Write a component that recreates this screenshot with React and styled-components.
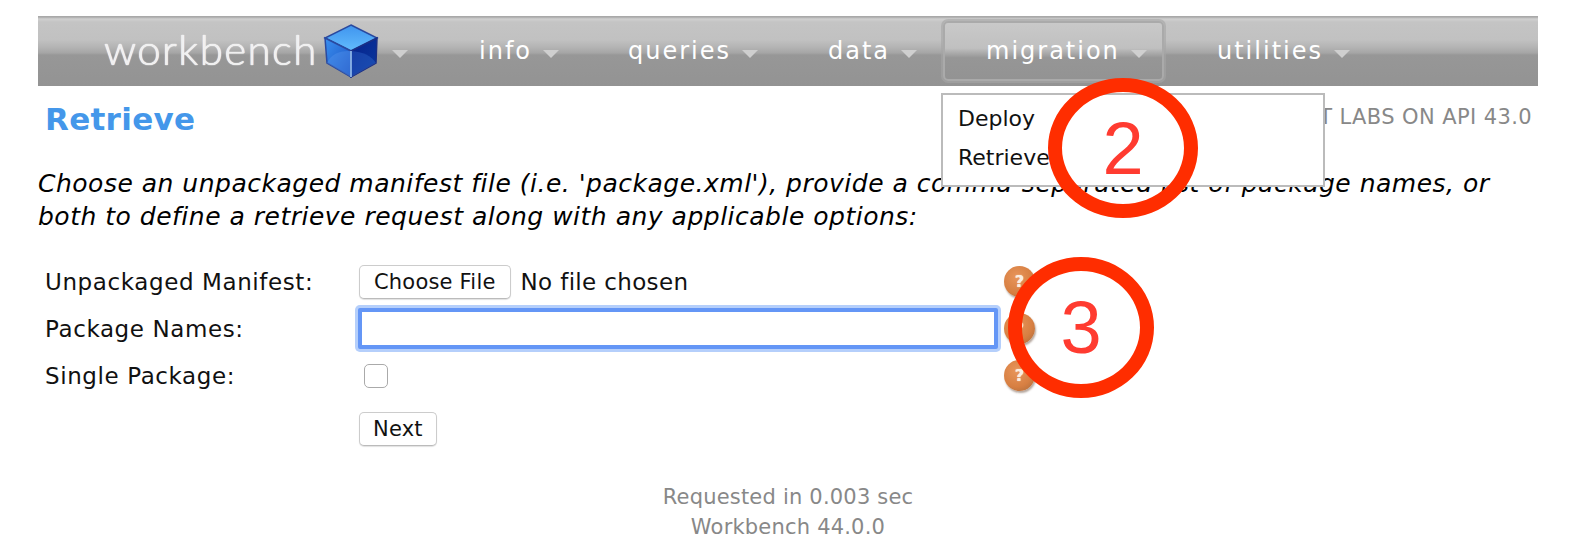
import React from "react";
import styled, { createGlobalStyle } from "styled-components";

const GlobalStyle = createGlobalStyle`
  html, body {
    margin: 0;
    padding: 0;
    background: #fff;
  }
  body {
    font-family: "DejaVu Sans", Verdana, sans-serif;
    color: #000;
  }
`;

const Page = styled.div`
  position: relative;
  width: 1576px;
  height: 556px;
  overflow: hidden;
  padding: 16px 38px 0 38px;
  box-sizing: border-box;
`;

const NavBar = styled.nav`
  position: relative;
  display: flex;
  align-items: center;
  height: 70px;
  background: linear-gradient(
    180deg,
    #a9a9a9 0,
    #a9a9a9 1px,
    #d0d0d0 3px,
    #c4c4c4 6px,
    #c1c1c1 24px,
    #b4b4b4 31px,
    #a5a5a5 37px,
    #979797 39px,
    #939393 70px
  );
`;

const Logo = styled.div`
  display: flex;
  align-items: center;
  width: 380px;
  padding-left: 66px;
  box-sizing: border-box;
`;

const LogoText = styled.span`
  font-family: Lato, "Open Sans", sans-serif;
  font-weight: 300;
  font-size: 42px;
  letter-spacing: 1.4px;
  color: #f0f0f0;
  text-shadow: 0 0 1px #fff, 0 0 1px #fff;
  margin-top: -5px;
`;

const Caret = styled.span`
  display: inline-block;
  width: 0;
  height: 0;
  margin-left: ${(p) => p.$gap || 11}px;
  margin-top: 6px;
  border-left: 8px solid transparent;
  border-right: 8px solid transparent;
  border-top: 8px solid #cfcfcf;
`;

const NavItem = styled.div`
  position: relative;
  display: flex;
  align-items: center;
  height: 60px;
  width: ${(p) => p.$width}px;
  padding-left: ${(p) => p.$pad}px;
  box-sizing: border-box;
  font-size: 24px;
  letter-spacing: 2px;
  color: #fff;
  ${(p) =>
    p.$active &&
    `
    border: 2px solid #aaa;
    border-radius: 5px;
    box-shadow: 0 0 0 2px rgba(165, 165, 165, 0.6);
    background: linear-gradient(180deg, #c9c9c9 0, #c0c0c0 45%, #969696 62%, #939393 100%);
  `}
`;

const Dropdown = styled.div`
  position: absolute;
  left: -4px;
  top: 70px;
  width: 384px;
  height: 94px;
  box-sizing: border-box;
  padding: 8px 15px;
  background: #fff;
  border: 2px solid #bbb;
  z-index: 2;
`;

const DropItem = styled.div`
  height: 39px;
  line-height: 32px;
  font-size: 22px;
  letter-spacing: 0;
  color: #111;
`;

const TitleRow = styled.div`
  display: flex;
  align-items: center;
  justify-content: space-between;
  height: 65px;
  padding: 0 6px 0 7px;
`;

const Title = styled.h1`
  margin: 0;
  font-size: 31px;
  letter-spacing: 0.3px;
  font-weight: 700;
  color: #4497ea;
`;

const Meta = styled.div`
  font-size: 21px;
  letter-spacing: 0.4px;
  color: #888;
  margin-top: -4px;
`;

const Instructions = styled.p`
  margin: 16px 0 0;
  font-size: 25px;
  letter-spacing: 0.5px;
  line-height: 33px;
  font-style: italic;
  color: #000;
  width: 1490px;
`;

const Form = styled.div`
  display: grid;
  grid-template-columns: 313px 652px 40px;
  grid-auto-rows: 47px;
  align-items: center;
  margin: 25px 0 0 7px;
`;

const Label = styled.div`
  font-size: 23px;
  letter-spacing: 0.6px;
  color: #111;
`;

const Field = styled.div`
  display: flex;
  align-items: center;
`;

const PlainButton = styled.button`
  height: 34px;
  padding: 0 ${(p) => p.$pad}px;
  margin-left: 1px;
  background: #fff;
  border: 1px solid #ccc;
  border-bottom-color: #bbb;
  border-radius: 5px;
  box-shadow: 0 1px 1px rgba(0, 0, 0, 0.12);
  font-family: inherit;
  font-size: 21px;
  letter-spacing: 0.2px;
  color: #111;
`;

const FileName = styled.span`
  margin-left: 10px;
  font-size: 23px;
  letter-spacing: 0.35px;
  color: #111;
`;

const TextBox = styled.div`
  width: 632px;
  height: 33px;
  background: #fff;
  border: 4px solid #6496f6;
  box-shadow: 0 0 0 3px #b5cffb;
  border-radius: 2px;
  box-sizing: content-box;
`;

const Check = styled.div`
  width: 22px;
  height: 22px;
  margin-left: 6px;
  border: 1px solid #aaa;
  border-radius: 5px;
  background: #fff;
`;

const Help = styled.div`
  width: 31px;
  height: 31px;
  margin-left: -6px;
  border-radius: 50%;
  display: flex;
  align-items: center;
  justify-content: center;
  background: radial-gradient(circle at 40% 35%, #e8955a 0, #d77f42 58%, #a3683c 100%);
  box-shadow: 1px 2px 2px rgba(90, 60, 40, 0.45);
  color: #fbeee0;
  font-size: 16px;
  font-weight: 700;
  text-shadow: 0 0 1px #fff;
`;

const NextRow = styled.div`
  margin: 13px 0 0 320px;
`;

const Footer = styled.div`
  margin-top: 36px;
  text-align: center;
  font-size: 21px;
  letter-spacing: 0.2px;
  line-height: 30px;
  color: #888;
`;

const Ring = styled.div`
  position: absolute;
  left: ${(p) => p.$x}px;
  top: ${(p) => p.$y}px;
  width: ${(p) => p.$w}px;
  height: ${(p) => p.$h}px;
  box-sizing: border-box;
  border: 14px solid #ff2d00;
  border-radius: 50%;
  display: flex;
  align-items: center;
  justify-content: center;
  font-family: "Liberation Sans", Arial, sans-serif;
  font-size: 74px;
  color: #ff3b30;
  z-index: 3;
`;

function Cube() {
  return (
    <svg width="56" height="54" viewBox="0 0 56 54" style={{ marginLeft: 5 }}>
      <defs>
        <linearGradient id="top" x1="0" y1="0" x2="0" y2="1">
          <stop offset="0" stopColor="#3f94ee" />
          <stop offset="1" stopColor="#62bcfd" />
        </linearGradient>
        <linearGradient id="left" x1="0" y1="0" x2="1" y2="1">
          <stop offset="0" stopColor="#3a90f0" />
          <stop offset="1" stopColor="#1a4fc0" />
        </linearGradient>
        <linearGradient id="right" x1="0" y1="0" x2="1" y2="1">
          <stop offset="0" stopColor="#06208a" />
          <stop offset="1" stopColor="#0a3aa0" />
        </linearGradient>
      </defs>
      <path d="M28 1 L54 14 L28 27 L2 14 Z" fill="url(#top)" stroke="#2a4aa0" strokeWidth="1.5" />
      <path d="M2 14 L28 27 L28 53 L4 39 Z" fill="url(#left)" stroke="#2a4aa0" strokeWidth="1.5" />
      <path d="M54 14 L28 27 L28 53 L53 39 Z" fill="url(#right)" stroke="#1a2f85" strokeWidth="1.5" />
      <path d="M4 39 Q10 26 28 27 L28 53 Z" fill="#5b9cf0" opacity="0.35" />
      <path d="M53 39 Q46 28 28 27 L28 53 Z" fill="#3f7fe0" opacity="0.3" />
      <path d="M28 27 L28 53" stroke="#9fc8f5" strokeWidth="1.5" />
    </svg>
  );
}

export default function App() {
  return (
    <>
      <GlobalStyle />
      <Page>
        <NavBar>
          <Logo>
            <LogoText>workbench</LogoText>
            <Cube />
            <Caret $gap={13} />
          </Logo>
          <NavItem $width={150} $pad={61}>
            info
            <Caret />
          </NavItem>
          <NavItem $width={200} $pad={60}>
            queries
            <Caret />
          </NavItem>
          <NavItem $width={175} $pad={60}>
            data
            <Caret />
          </NavItem>
          <NavItem $width={221} $pad={41} $active>
            migration
            <Caret />
            <Dropdown>
              <DropItem>Deploy</DropItem>
              <DropItem>Retrieve</DropItem>
            </Dropdown>
          </NavItem>
          <NavItem $width={220} $pad={53}>
            utilities
            <Caret />
          </NavItem>
        </NavBar>

        <TitleRow>
          <Title>Retrieve</Title>
          <Meta>AT LABS ON API 43.0</Meta>
        </TitleRow>

        <Instructions>
          Choose an unpackaged manifest file (i.e. 'package.xml'), provide a comma-separated list of package names, or
          both to define a retrieve request along with any applicable options:
        </Instructions>

        <Form>
          <Label>Unpackaged Manifest:</Label>
          <Field>
            <PlainButton $pad={14}>Choose File</PlainButton>
            <FileName>No file chosen</FileName>
          </Field>
          <Help>?</Help>

          <Label>Package Names:</Label>
          <Field>
            <TextBox />
          </Field>
          <Help>?</Help>

          <Label>Single Package:</Label>
          <Field>
            <Check />
          </Field>
          <Help>?</Help>
        </Form>

        <NextRow>
          <PlainButton $pad={13}>Next</PlainButton>
        </NextRow>

        <Footer>
          Requested in 0.003 sec
          <br />
          Workbench 44.0.0
        </Footer>

        <Ring $x={1048} $y={78} $w={150} $h={140}>
          2
        </Ring>
        <Ring $x={1008} $y={257} $w={146} $h={141}>
          3
        </Ring>
      </Page>
    </>
  );
}
